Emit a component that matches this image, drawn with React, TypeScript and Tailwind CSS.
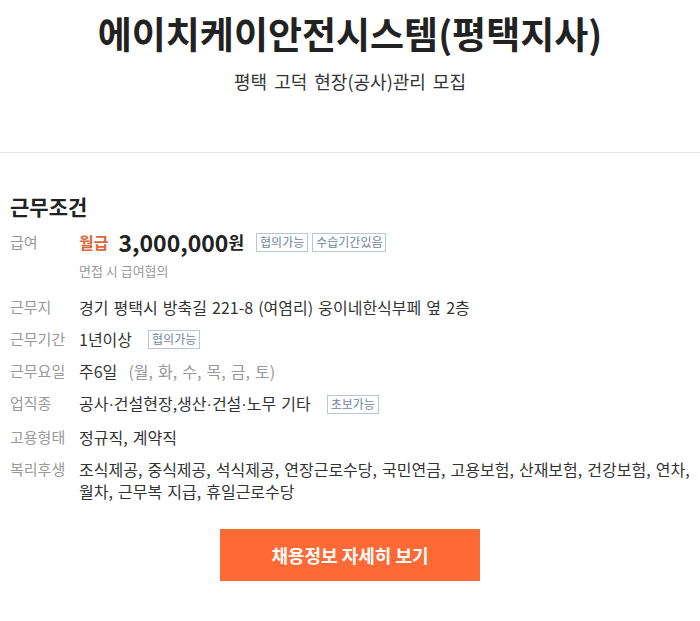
import React from 'react'

const font = { fontFamily: '"Noto Sans CJK KR", "Noto Sans", sans-serif' }

function Badge({ children, className = '' }: { children: React.ReactNode; className?: string }) {
  return (
    <span
      className={
        'inline-flex h-[19px] items-center border border-[#b9c7d4] px-[3px] text-[12px] leading-none text-[#6d86a0] [word-spacing:0] ' +
        className
      }
    >
      {children}
    </span>
  )
}

function Dot() {
  return <span className="font-['Liberation_Sans',sans-serif]">·</span>
}

function Row({ label, children }: { label: string; children: React.ReactNode }) {
  return (
    <div className="flex text-[16px] leading-[22px]">
      <div className="w-[69px] shrink-0 text-[15px] text-[#999]">{label}</div>
      <div className="flex-1 text-[#333] [word-spacing:1.5px]">{children}</div>
    </div>
  )
}

export default function App() {
  return (
    <div className="min-h-[621px] w-[700px] bg-white text-[#222]" style={font}>
      {/* 상단 회사명 */}
      <div className="pt-[11px] pb-[59px] text-center">
        <h1 className="text-[37px] font-bold leading-[44px]">에이치케이안전시스템(평택지사)</h1>
        <p className="mt-[14px] text-[18px] leading-[24px] text-[#333] [word-spacing:3px]">
          평택 고덕 현장(공사)관리 모집
        </p>
      </div>
      <div className="h-px bg-[#e8e8e8]" />

      <div className="px-[10px] pt-[39px]">
        <h2 className="text-[21px] font-bold leading-[28px]">근무조건</h2>

        <div className="mt-[10px] flex items-center leading-[24px]">
          <div className="w-[69px] shrink-0 self-start text-[15px] text-[#999]">급여</div>
          <div className="flex items-center">
            <span className="text-[16px] font-semibold text-[#e0643c]">월급</span>
            <span className="ml-[10px] text-[23px] font-bold text-[#222]">3,000,000</span>
            <span className="text-[17px] font-bold text-[#222]">원</span>
            <Badge className="ml-3">협의가능</Badge>
            <Badge className="ml-[4px]">수습기간있음</Badge>
          </div>
        </div>
        <div className="mt-2 pl-[69px] text-[13px] leading-[18px] text-[#999]">면접 시 급여협의</div>

        <div className="mt-[16px] flex flex-col gap-[10px]">
          <Row label="근무지">경기 평택시 방축길 221-8 (여염리) 웅이네한식부페 옆 2층</Row>
          <Row label="근무기간">
            <span className="inline-flex items-center">
              1년이상
              <Badge className="ml-4">협의가능</Badge>
            </span>
          </Row>
          <Row label="근무요일">
            주6일 <span className="ml-[6px] text-[#999]">(월, 화, 수, 목, 금, 토)</span>
          </Row>
          <Row label="업직종">
            <span className="inline-flex items-center">
              <span>
                공사<Dot />건설현장,생산<Dot />건설<Dot />노무 기타
              </span>
              <Badge className="ml-4">초보가능</Badge>
            </span>
          </Row>
          <Row label="고용형태">정규직, 계약직</Row>
          <Row label="복리후생">
            조식제공, 중식제공, 석식제공, 연장근로수당, 국민연금, 고용보험, 산재보험, 건강보험, 연차, 월차, 근무복 지급, 휴일근로수당
          </Row>
        </div>

        <div className="mt-[27px] flex justify-center">
          <button className="h-[52px] w-[260px] bg-[#fd6a35] text-[18px] font-bold text-white">
            채용정보 자세히 보기
          </button>
        </div>
      </div>
    </div>
  )
}
